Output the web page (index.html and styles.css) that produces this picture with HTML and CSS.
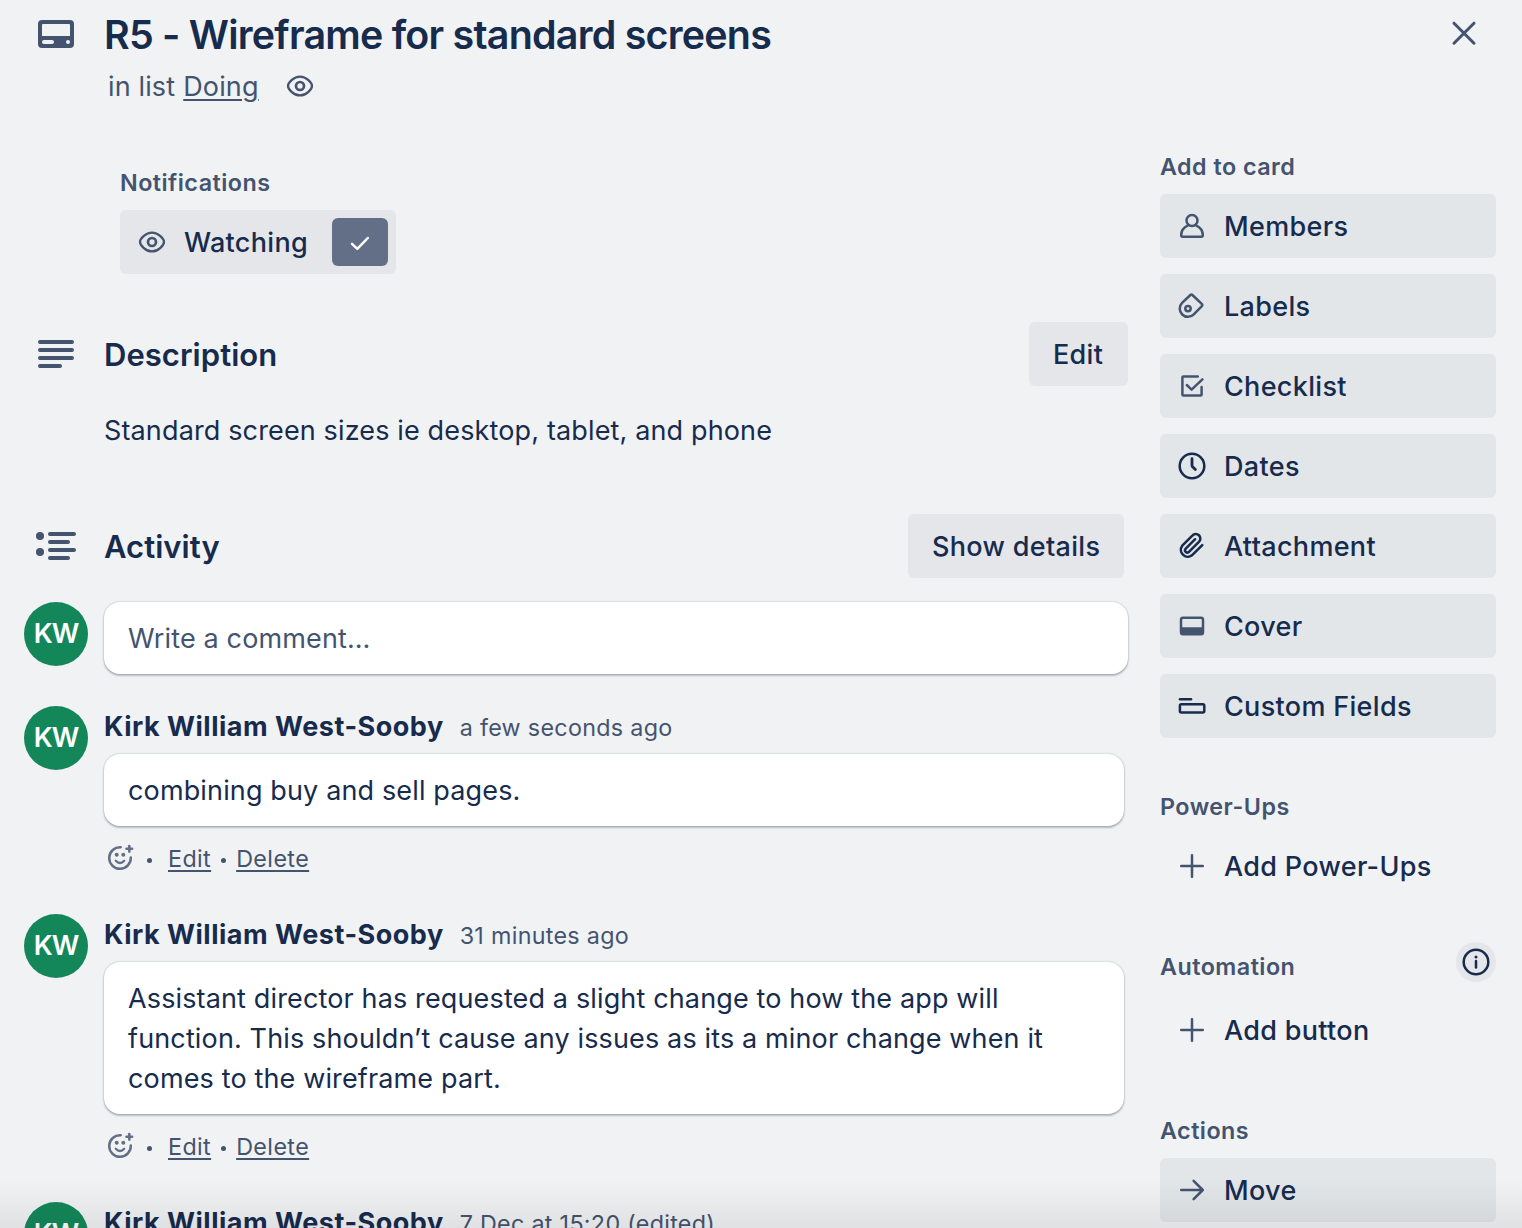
FILE: index.html
```html
<!DOCTYPE html>
<html lang="en">
<head>
<meta charset="utf-8">
<title>R5 - Wireframe for standard screens</title>
<link rel="stylesheet" href="styles.css">
</head>
<body>
<svg class="sprite" aria-hidden="true">
  <symbol id="eye" viewBox="0 0 32 32"><path d="M4 16C4 13 9.5 6.6 16 6.6S28 13 28 16S22.5 25.4 16 25.4S4 19 4 16Z" stroke-width="2.3"/><circle cx="16" cy="16" r="4" stroke-width="2.7"/></symbol>
  <symbol id="plus" viewBox="0 0 32 32"><path d="M16 5.2V26.8M5.2 16H26.8"/></symbol>
  <symbol id="smile" viewBox="0 0 32 32"><path d="M16.8 5.2A10.8 10.8 0 1 0 26.8 15.4" stroke-width="2.5"/><path d="M11.8 18.8Q16 23.2 20.2 18.8" stroke-width="2.3"/><circle cx="12.7" cy="12.8" r="2" class="solid"/><circle cx="19.3" cy="12.8" r="2" class="solid"/><path d="M25.3 4V9.6M22.5 6.8H28.1" stroke-width="2.6"/></symbol>
</svg>
<div class="card">
  <header class="card-header">
    <svg class="icon-lg" viewBox="0 0 48 48"><path class="solid" fill-rule="evenodd" d="M10 10H38a4 4 0 0 1 4 4V34a4 4 0 0 1-4 4H10a4 4 0 0 1-4-4V14a4 4 0 0 1 4-4ZM11 14a1 1 0 0 0-1 1V26H38V15a1 1 0 0 0-1-1ZM12 30a2 2 0 0 0 0 4H20a2 2 0 0 0 0-4ZM36 30a2 2 0 1 0 0 4a2 2 0 0 0 0-4Z"/></svg>
    <div class="heading">
      <h1>R5 - Wireframe for standard screens</h1>
      <p class="in-list"><span class="t">in list</span> <a class="t">Doing</a><svg class="icon"><use href="#eye"/></svg></p>
    </div>
    <svg class="icon-lg close" viewBox="0 0 48 48"><path d="M14 13.2L34 33.2M34 13.2L14 33.2"/></svg>
  </header>
  <div class="columns">
    <main class="main">
      <section class="notifications">
        <h3>Notifications</h3>
        <div class="watch"><svg class="icon"><use href="#eye"/></svg><span class="t">Watching</span><span class="check"><svg class="icon" viewBox="0 0 32 32"><path d="M8 17.8L13.3 22.8L23.8 12"/></svg></span></div>
      </section>
      <section class="description">
        <div class="section-head">
          <svg class="icon-lg" viewBox="0 0 48 48"><path d="M8 12H40M8 20H40M8 28H40M8 36H28" stroke-width="4"/></svg>
          <h2>Description</h2>
          <button class="btn edit"><span class="t">Edit</span></button>
        </div>
        <p class="desc-text">Standard screen sizes ie desktop, tablet, and phone</p>
      </section>
      <section class="activity">
        <div class="section-head">
          <svg class="icon-lg" viewBox="0 0 48 48"><circle class="solid" cx="8" cy="14" r="4"/><circle class="solid" cx="8" cy="30" r="4"/><path d="M18 12H42M18 20H36M18 28H42M18 36H36" stroke-width="4"/></svg>
          <h2>Activity</h2>
          <button class="btn details"><span class="t">Show details</span></button>
        </div>
        <div class="entry composer"><span class="avatar">KW</span><div class="bubble placeholder">Write a comment…</div></div>
        <article class="entry">
          <span class="avatar">KW</span>
          <div class="body">
            <div class="byline"><b>Kirk William West-Sooby</b><time>a few seconds ago</time></div>
            <div class="bubble">combining buy and sell pages.</div>
            <div class="actions"><svg class="icon"><use href="#smile"/></svg><i></i><a class="t">Edit</a><i></i><a class="t">Delete</a></div>
          </div>
        </article>
        <article class="entry">
          <span class="avatar">KW</span>
          <div class="body">
            <div class="byline"><b>Kirk William West-Sooby</b><time>31 minutes ago</time></div>
            <div class="bubble">Assistant director has requested a slight change to how the app will<br>function. This shouldn’t cause any issues as its a minor change when it<br>comes to the wireframe part.</div>
            <div class="actions"><svg class="icon"><use href="#smile"/></svg><i></i><a class="t">Edit</a><i></i><a class="t">Delete</a></div>
          </div>
        </article>
        <article class="entry">
          <span class="avatar">KW</span>
          <div class="body">
            <div class="byline"><b>Kirk William West-Sooby</b><time>7 Dec at 15:20 (edited)</time></div>
          </div>
        </article>
      </section>
    </main>
    <aside class="sidebar">
      <section>
        <h3>Add to card</h3>
        <div class="stack">
          <button class="side"><svg class="icon" viewBox="0 0 32 32"><circle cx="16" cy="10.4" r="5.5"/><path d="M11.6 15.6C7.6 17.4 5.2 20.8 5.2 25.2Q5.2 26.7 6.7 26.7H25.3Q26.8 26.7 26.8 25.2C26.8 20.8 24.4 17.4 20.4 15.6"/></svg><span class="t">Members</span></button>
          <button class="side"><svg class="icon" viewBox="0 0 32 32"><path d="M14.4 5L6.1 12.9A8.2 8.2 0 0 0 17.8 24.4L26.1 15.8Q26.8 14.9 26 14.1L16.4 5Q15.4 4.1 14.4 5Z"/><circle cx="12" cy="18.6" r="2.7"/></svg><span class="t">Labels</span></button>
          <button class="side"><svg class="icon" viewBox="0 0 32 32"><path d="M21.8 6.4H7.4Q6.4 6.4 6.4 7.4V24.6Q6.4 25.6 7.4 25.6H24.6Q25.6 25.6 25.6 24.6V17M10.8 15L15.6 19.6L26.4 9.4"/></svg><span class="t">Checklist</span></button>
          <button class="side dark"><svg class="icon" viewBox="0 0 32 32"><circle cx="16" cy="16" r="12.3"/><path d="M16 8.6V15.2Q16 16 16.5 16.7L19.4 19.6" stroke-width="2.8"/></svg><span class="t">Dates</span></button>
          <button class="side dark"><svg class="icon" viewBox="0 0 32 32"><path transform="translate(1.9 2.1) scale(1.15)" stroke-width="2.2" d="m21.2 11.3-9 8.9a6 6 0 0 1-8.4-8.4l8.5-8.5A4 4 0 1 1 18 8.8l-8.6 8.6a2 2 0 0 1-2.8-2.8l8.4-8.4"/></svg><span class="t">Attachment</span></button>
          <button class="side"><svg class="icon" viewBox="0 0 32 32"><rect x="5" y="7.7" width="22" height="16.6" rx="2"/><path class="solid" d="M4.5 17.3H27.5V22.5Q27.5 25 25.5 25H6.5Q4.5 25 4.5 22.5Z"/></svg><span class="t">Cover</span></button>
          <button class="side dark"><svg class="icon" viewBox="0 0 32 32"><path d="M4 9.3H15"/><rect x="3.9" y="14.3" width="24.4" height="8.2" rx="1.5"/></svg><span class="t">Custom Fields</span></button>
        </div>
      </section>
      <section>
        <h3>Power-Ups</h3>
        <button class="side plain"><svg class="icon"><use href="#plus"/></svg><span class="t">Add Power-Ups</span></button>
      </section>
      <section>
        <div class="auto-head"><h3>Automation</h3><span class="info"><svg class="icon" viewBox="0 0 32 32"><circle cx="16" cy="16" r="12.3"/><path d="M16 15V21.4"/><circle class="solid" cx="16" cy="11" r="1.5"/></svg></span></div>
        <button class="side plain"><svg class="icon"><use href="#plus"/></svg><span class="t">Add button</span></button>
      </section>
      <section>
        <h3>Actions</h3>
        <button class="side"><svg class="icon" viewBox="0 0 32 32"><path d="M5.2 16H26.8M17.6 6.8L26.8 16L17.6 25.2"/></svg><span class="t">Move</span></button>
      </section>
    </aside>
  </div>
  <div class="fade"></div>
</div>
</body>
</html>
```
FILE: styles.css
```css
* { box-sizing: border-box; }
body {
  margin: 0;
  background: #f1f2f4;
  color: #172b4d;
  font: 400 27px/40px Inter, "Liberation Sans", sans-serif;
  letter-spacing: .14px;
}
h1, h2, h3, p { margin: 0; }
button { border: 0; font: inherit; color: inherit; text-align: left; }
svg { display: block; flex: none; fill: none; stroke: currentColor; stroke-width: 2.5; stroke-linecap: round; stroke-linejoin: round; }
.sprite { width: 0; height: 0; position: absolute; }
.solid { fill: currentColor; stroke: none; }
.t { padding-top: 2px; white-space: nowrap; }
.icon { width: 32px; height: 32px; color: #44546f; }
.icon-lg { width: 48px; height: 48px; color: #44546f; }
.card { position: relative; height: 1228px; overflow: hidden; }

.card-header { display: flex; height: 150px; padding: 10px 34px 0 32px; }
.heading { flex: 1; padding-left: 24px; }
h1 { padding-top: 1px; font-size: 39.4px; line-height: 48px; font-weight: 600; letter-spacing: -.76px; }
.in-list { display: flex; align-items: center; gap: 8px; height: 40px; margin: 7px 0 0 4px; color: #44546f; }
.in-list a, .actions a { text-decoration: underline; text-decoration-thickness: 2px; text-underline-offset: 3px; }
.in-list .icon { margin-left: 17px; }
.close { stroke-width: 3; }

.columns { display: flex; gap: 32px; padding: 0 26px 0 24px; }
.main { width: 1104px; flex: none; }
h3 { height: 32px; font-size: 23.3px; line-height: 34px; font-weight: 600; letter-spacing: .48px; color: #44546f; }
.notifications { padding: 16px 0 0 96px; }
.watch, .btn, .side { font-weight: 500; letter-spacing: .32px; }
.watch { display: flex; align-items: center; width: 276px; height: 64px; margin-top: 12px; padding: 0 8px 0 16px; border-radius: 6px; background: #e4e6ea; }
.watch > .t { margin-left: 16px; }
.check { display: flex; align-items: center; justify-content: center; width: 56px; height: 48px; margin-left: auto; border-radius: 6px; background: #626f86; }
.check .icon { color: #fff; }

.section-head { display: flex; align-items: center; height: 64px; padding-left: 8px; }
h2 { flex: 1; padding: 2px 0 0 24px; font-size: 31px; font-weight: 600; letter-spacing: .04px; }
.btn { display: flex; align-items: center; height: 64px; padding: 0 24px; border-radius: 6px; background: #e4e6ea; }
.edit { width: 99px; }
.details { width: 216px; margin-right: 4px; }
.description { margin-top: 48px; }
.desc-text { height: 64px; padding: 25px 0 0 80px; }
.activity { margin-top: 64px; }

.entry { display: flex; gap: 16px; margin-top: 36px; }
.entry.composer { margin: 24px 0 32px; }
.composer + .entry { margin-top: 0; }
.avatar { display: flex; align-items: center; justify-content: center; flex: none; width: 64px; height: 64px; border-radius: 50%; background: #14875a; color: #fff; font-weight: 600; letter-spacing: -1px; }
.body { width: 1020px; }
.bubble { min-height: 72px; padding: 17px 24px 15px; border-radius: 16px; background: #fff; box-shadow: 0 2px 2px #091e4240, 0 0 2px #091e424f; }
.composer .bubble { flex: 1; }
.placeholder { color: #44546f; }
.byline { display: flex; gap: 16px; height: 40px; margin-bottom: 8px; line-height: 42px; }
.byline b { font-weight: 700; letter-spacing: .51px; }
.byline time { font-size: 23.3px; line-height: 44px; letter-spacing: .3px; color: #44546f; }
.actions { display: flex; align-items: center; height: 40px; margin-top: 12px; color: #44546f; font-size: 23.3px; letter-spacing: .4px; }
.actions .icon { color: #626f86; }
.actions i { width: 5px; height: 5px; margin: 4px 10px 0; border-radius: 50%; background: #44546f; }
.actions .icon + i { margin: 4px 16px 0 11px; }

.sidebar { width: 336px; }
.sidebar section + section { margin-top: 52px; }
.sidebar h3 { margin-bottom: 12px; }
.stack { display: grid; gap: 16px; }
.side { display: flex; align-items: center; gap: 16px; width: 100%; height: 64px; padding: 0 16px; border-radius: 6px; background: #e2e6e9; }
.side.plain { background: none; }
.dark .icon, .info .icon { color: #172b4d; }
.auto-head { display: flex; justify-content: space-between; height: 32px; margin-bottom: 16px; }
.sidebar .auto-head h3 { margin: 0; }
.info { display: flex; align-items: center; justify-content: center; width: 40px; height: 40px; margin-top: -8px; border-radius: 50%; background: #e4e6ea; }

.fade { position: absolute; left: 0; right: 0; bottom: 0; height: 48px; background: linear-gradient(#0000, #00000012); }
```
